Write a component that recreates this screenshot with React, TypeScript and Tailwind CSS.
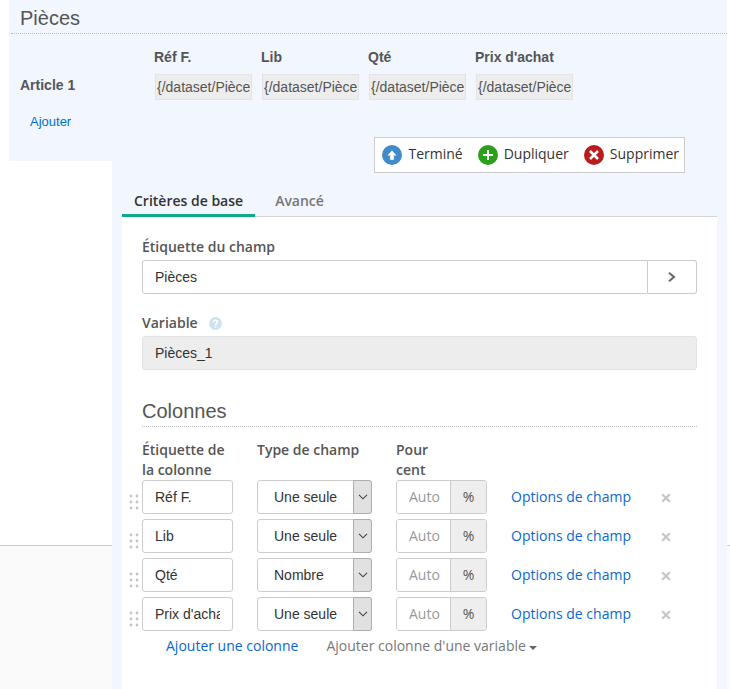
import React, { useState } from 'react';

interface Column {
  label: string;
  type: string;
}

const COLUMNS: Column[] = [
  { label: 'Réf F.', type: 'Une seule ligne' },
  { label: 'Lib', type: 'Une seule ligne' },
  { label: 'Qté', type: 'Nombre' },
  { label: "Prix d'achat", type: 'Une seule ligne' },
];

const FIELD_TYPES = ['Une seule ligne', 'Nombre'];

const UpIcon = () => (
  <svg width="20" height="20" viewBox="0 0 20 20" aria-hidden="true">
    <circle cx="10" cy="10" r="10" fill="#428bca" />
    <path d="M10 5.8 14 10.2H11.6V14.6H8.4V10.2H6Z" fill="#fff" stroke="#fff" strokeWidth=".6" strokeLinejoin="round" />
  </svg>
);

const PlusIcon = () => (
  <svg width="20" height="20" viewBox="0 0 20 20" aria-hidden="true">
    <circle cx="10" cy="10" r="10" fill="#2ca01c" />
    <path d="M10 5V15M5 10H15" stroke="#fff" strokeWidth="2" />
  </svg>
);

const CrossIcon = () => (
  <svg width="20" height="20" viewBox="0 0 20 20" aria-hidden="true">
    <circle cx="10" cy="10" r="10" fill="#b91c1c" />
    <path d="M6 6 14 14M14 6 6 14" stroke="#fff" strokeWidth="2.5" />
  </svg>
);

const GripIcon = () => (
  <svg width="10" height="16" viewBox="0 0 10 16" fill="#c4c4c4" aria-hidden="true">
    {[2, 8, 14].map((y) => (
      <React.Fragment key={y}>
        <circle cx="2" cy={y} r="1.4" />
        <circle cx="8" cy={y} r="1.4" />
      </React.Fragment>
    ))}
  </svg>
);

const HelpIcon = () => (
  <svg width="13" height="13" viewBox="0 0 13 13" aria-hidden="true">
    <circle cx="6.5" cy="6.5" r="6.5" fill="#cfe3ec" />
    <path d="M4.5 5C4.5 2.6 8.5 2.6 8.5 5 8.5 6.3 6.5 6.3 6.5 8" fill="none" stroke="#fff" strokeWidth="1.5" />
    <path d="M5.7 9H7.3V10.5H5.7Z" fill="#fff" />
  </svg>
);

const INPUT = "h-[34px] rounded-[3px] border border-[#ccc] bg-white px-3 font-['Liberation_Sans',sans-serif] text-sm text-[#333]";

const Preview = () => (
  <section className="ml-[9px] mr-[3px] h-[161px] bg-[#f1f6ff] font-['Liberation_Sans',sans-serif] text-[#555]">
    <h2 className="ml-0.5 border-b border-dotted border-[#bbb] pt-1.5 pb-[3px] pl-[9px] text-xl leading-6">Pièces</h2>
    <table className="mt-[11px] ml-[11px] text-left text-sm">
      <thead>
        <tr>
          <th className="w-[134px]" />
          {COLUMNS.map((c) => (
            <th key={c.label} className="w-[107px] pb-[5px] leading-6">{c.label}</th>
          ))}
        </tr>
      </thead>
      <tbody>
        <tr>
          <th className="pb-1">Article 1</th>
          {COLUMNS.map((c) => (
            <td key={c.label}>
              <input
                className="ml-px block h-[26px] w-[97px] border border-[#e3e3e3] bg-[#ededed] px-px"
                aria-label={c.label}
                value="{/dataset/Pièces}"
                readOnly
              />
            </td>
          ))}
        </tr>
      </tbody>
    </table>
    <a href="#ajouter" className="mt-3 ml-[21px] inline-block text-[13px] leading-5 text-[#0070c9]">Ajouter</a>
  </section>
);

const TOOL_BUTTON = 'flex items-center gap-1.5';

const Toolbar = () => (
  <div className="mr-8 ml-auto flex h-9 w-fit items-center gap-[15px] border border-[#ccc] bg-white pr-[5px] pl-[7px] text-[#333]">
    <button className={TOOL_BUTTON}><UpIcon /><span className="pb-0.5">Terminé</span></button>
    <button className={TOOL_BUTTON}><PlusIcon /><span className="pb-0.5">Dupliquer</span></button>
    <button className={TOOL_BUTTON}><CrossIcon /><span className="pb-0.5">Supprimer</span></button>
  </div>
);

const ColumnRow: React.FC<{ column: Column }> = ({ column }) => (
  <tr className="h-[39px] align-top">
    <td className="pt-[14px] pl-[7px]"><GripIcon /></td>
    <td className="pr-6">
      <input className={`${INPUT} block w-full`} defaultValue={column.label} aria-label="Étiquette de la colonne" />
    </td>
    <td className="pr-6">
      <div className="relative">
        <select
          className="block h-[34px] w-full appearance-none rounded-[3px] border border-[#ccc] bg-white pr-[30px] pl-4 font-['Liberation_Sans',sans-serif] text-sm text-[#333]"
          defaultValue={column.type}
          aria-label="Type de champ"
        >
          {FIELD_TYPES.map((t) => <option key={t}>{t}</option>)}
        </select>
        <span className="pointer-events-none absolute inset-y-0 right-0 flex w-[19px] items-center justify-center rounded-r-[3px] border border-[#adadad] bg-[#e1e1e1]">
          <svg width="10" height="6" viewBox="0 0 10 6" fill="none" stroke="#444" strokeWidth="1.1">
            <path d="M1 .8 5 4.8 9 .8" />
          </svg>
        </span>
      </div>
    </td>
    <td className="pr-6">
      <div className="flex h-[34px] overflow-hidden rounded-[3px] border border-[#ccc]">
        <input className="min-w-0 flex-1 bg-white pl-3 placeholder:text-[#999]" placeholder="Auto" aria-label="Pour cent" />
        <span className="flex w-9 items-center justify-center border-l border-[#ccc] bg-[#eee] text-[#555]">%</span>
      </div>
    </td>
    <td className="pt-[7px] leading-5"><a href="#options" className="text-[#0a67d0]">Options de champ</a></td>
    <td className="pt-[13px]">
      <button className="block" aria-label="Supprimer la colonne">
        <svg width="10" height="10" viewBox="0 0 10 10" stroke="#c6c6c6" strokeWidth="2.2">
          <path d="M1.2 1.2 8.8 8.8M8.8 1.2 1.2 8.8" />
        </svg>
      </button>
    </td>
  </tr>
);

const FieldPanel = () => (
  <div className="flex-1 bg-white px-5 pt-5">
    <label htmlFor="label" className="mb-[3px] block leading-5 font-semibold">Étiquette du champ</label>
    <div className="mb-[19px] flex">
      <input id="label" className={`${INPUT} min-w-0 flex-1 rounded-r-none`} defaultValue="Pièces" />
      <button className="flex h-[34px] w-[49px] items-center justify-center rounded-r-[3px] border border-l-0 border-[#ccc]" aria-label="Ouvrir">
        <svg width="8" height="10" viewBox="0 0 8 10" fill="none" stroke="#666" strokeWidth="2">
          <path d="M1 .8 6 5 1 9.2" />
        </svg>
      </button>
    </div>
    <div className="mb-[3px] flex items-center gap-[11px] leading-5">
      <label htmlFor="variable" className="font-semibold">Variable</label>
      <HelpIcon />
    </div>
    <input
      id="variable"
      className="block h-[34px] w-full rounded-[3px] border border-[#e2e2e2] bg-[#ededed] px-3 font-['Liberation_Sans',sans-serif] text-sm text-[#333]"
      defaultValue="Pièces_1"
      readOnly
    />

    <h3 className="mt-[29px] border-b border-dotted border-[#bbb] pb-[3px] font-['Liberation_Sans',sans-serif] text-xl leading-6">Colonnes</h3>
    <table className="mt-[13px] -ml-5 w-[calc(100%+20px)] table-fixed text-left">
      <thead>
        <tr className="align-top leading-5">
          <th className="w-5" />
          <th className="w-[115px] pr-6 font-semibold">Étiquette de la colonne</th>
          <th className="w-[139px] font-semibold">Type de champ</th>
          <th className="w-[115px] pr-16 font-semibold">Pour cent</th>
          <th className="w-[150px]" />
          <th />
        </tr>
      </thead>
      <tbody>
        {COLUMNS.map((c) => <ColumnRow key={c.label} column={c} />)}
      </tbody>
    </table>
    <div className="flex gap-7 pl-6 leading-5">
      <a href="#colonne" className="text-[#0a67d0]">Ajouter une colonne</a>
      <button className="flex items-center gap-[3px] text-[#777]">
        Ajouter colonne d'une variable
        <svg className="mt-1" width="8" height="4" viewBox="0 0 8 4" fill="#666"><path d="M0 0H8L4 4Z" /></svg>
      </button>
    </div>
  </div>
);

export default function App() {
  const [tab, setTab] = useState('base');
  const tabStyle = (name: string) =>
    tab === name ? 'border-[#12a88a] text-[#333]' : 'border-transparent text-[#777]';

  return (
    <div className="flex min-h-screen flex-col bg-white font-['Open_Sans',sans-serif] text-sm text-[#555]">
      <Preview />
      <div className="flex flex-1">
        <div className="flex w-28 flex-col pt-96">
          <div className="flex-1 border-t border-[#ccc] bg-[#fafafa]" />
        </div>
        <div className="-mt-6 flex flex-1 flex-col bg-[#f1f6ff] px-[10px]">
          <Toolbar />
          <div className="mt-3 flex h-8 border-b border-[#d5d5d5]">
            <button className={`-mb-px h-8 border-b-3 px-3 pt-0.5 font-semibold ${tabStyle('base')}`} onClick={() => setTab('base')}>Critères de base</button>
            <button className={`-mb-px ml-2 h-8 border-b-3 px-3 pt-0.5 font-semibold ${tabStyle('advanced')}`} onClick={() => setTab('advanced')}>Avancé</button>
          </div>
          <FieldPanel />
        </div>
        <div className="flex w-[3px] flex-col pt-96">
          <div className="flex-1 border-t border-[#ccc] bg-[#fafafa]" />
        </div>
      </div>
    </div>
  );
}
